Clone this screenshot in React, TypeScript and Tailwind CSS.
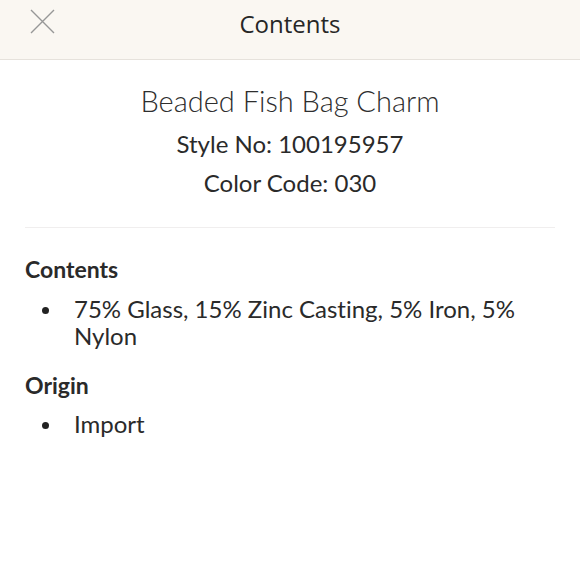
const items = {
  contents: ["75% Glass, 15% Zinc Casting, 5% Iron, 5% Nylon"],
  origin: ["Import"],
};

function Bullet({ text }: { text: string }) {
  return (
    <li className="flex items-start gap-[25px] pl-[17px]">
      <span className="mt-[12px] h-[7px] w-[7px] shrink-0 rounded-full bg-[#222]" />
      <span>{text}</span>
    </li>
  );
}

export default function App() {
  return (
    <div className="h-[580px] w-[580px] overflow-hidden bg-white font-['Lato','Liberation_Sans',sans-serif] text-[#2a2a2a] [font-variant-ligatures:none]">
      <header className="relative flex h-[60px] justify-center border-b border-[#e6e2dc] bg-[#faf7f2] pt-[12px]">
        <button className="absolute left-[30px] top-[9px] text-[#979797]">
          <svg width="25" height="25" viewBox="0 0 25 25" fill="none" stroke="currentColor" strokeWidth="1.4">
            <path d="M1 1 L24 24 M24 1 L1 24" />
          </svg>
        </button>
        <h1 className="font-['Open_Sans','Liberation_Sans',sans-serif] text-[24px] leading-[24px] font-normal text-[#262626]">
          Contents
        </h1>
      </header>

      <main className="px-[25px]">
        <section className="flex flex-col items-center border-b border-[#f0eeee] pt-[22px] pb-[25px] text-center">
          <h2 className="text-[29px] leading-[38px] font-light text-[#2e2e2e]">Beaded Fish Bag Charm</h2>
          <p className="mt-[4px] text-[24px] leading-[40px]">Style No: 100195957</p>
          <p className="text-[24px] leading-[38px]">Color Code: 030</p>
        </section>

        <section className="pt-[27px]">
          <h3 className="text-[23px] leading-[28px] font-bold">Contents</h3>
          <ul className="mt-[12px] text-[24px] leading-[27px]">
            {items.contents.map((t) => (
              <Bullet key={t} text={t} />
            ))}
          </ul>
          <h3 className="mt-[22px] text-[23px] leading-[28px] font-bold">Origin</h3>
          <ul className="mt-[11px] text-[24px] leading-[27px]">
            {items.origin.map((t) => (
              <Bullet key={t} text={t} />
            ))}
          </ul>
        </section>
      </main>
    </div>
  );
}
